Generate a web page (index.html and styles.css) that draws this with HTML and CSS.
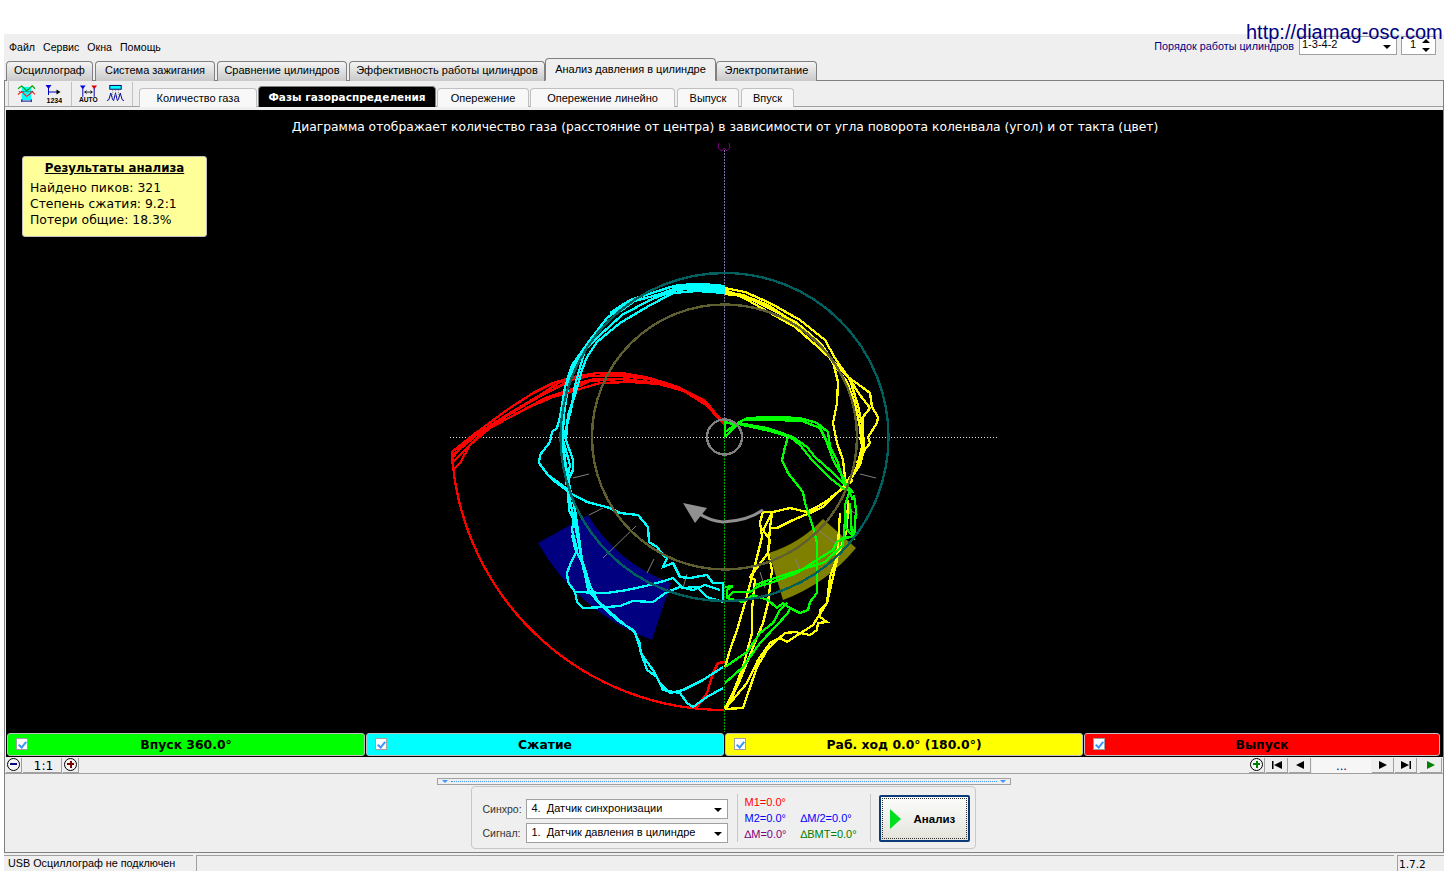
FILE: index.html
```html
<!DOCTYPE html>
<html lang="ru">

<head>
    <meta charset="UTF-8">
    <title>Анализ давления в цилиндре</title>
    <link rel="stylesheet" href="styles.css">
</head>

<body>
    <a class="site-url">http://diamag-osc.com</a>

    <div class="app">
        <div class="menubar">
            <span class="menu-item">Файл</span>
            <span class="menu-item">Сервис</span>
            <span class="menu-item">Окна</span>
            <span class="menu-item">Помощь</span>
            <div class="order">
                <span class="order-label">Порядок работы цилиндров</span>
                <div class="combo order-combo">1-3-4-2<i class="arrow-down"></i></div>
                <div class="combo order-spin">1<span class="spin-arrows"><i class="arrow-up"></i><i class="arrow-down"></i></span></div>
            </div>
        </div>

        <div class="tabs">
            <div class="tab tab-a">Осциллограф</div>
            <div class="tab tab-b">Система зажигания</div>
            <div class="tab tab-c">Сравнение цилиндров</div>
            <div class="tab tab-d">Эффективность работы цилиндров</div>
            <div class="tab tab-active">Анализ давления в цилиндре</div>
            <div class="tab tab-f">Электропитание</div>
        </div>

        <div class="panel">
            <div class="subbar">
                <div class="tools">
                    <svg class="tool tool-wide" viewBox="0 0 20 20">
                        <rect x="5" y="3" width="10" height="14" fill="#00ffff" />
                        <path d="M1 5 L5 2 L8 5 L10 7 L13 5 L16 2 L19 5" fill="none" stroke="#00a000" stroke-width="1.2" />
                        <path d="M1 11 L5 8 L8 11 L10 13 L13 11 L16 8 L19 11" fill="none" stroke="#ff2020" stroke-width="1.2" />
                        <path d="M2 8 H18" stroke="#333" stroke-dasharray="1 1" />
                        <path d="M5 18 H15 M5 16 V19 M15 16 V19" stroke="#000090" stroke-width="1" fill="none" />
                    </svg>
                    <svg class="tool tool-second" viewBox="0 0 16 19">
                        <path d="M0 1 H6 L3 5 Z" fill="#0000e0" />
                        <path d="M3 4 V11 M3 8 H13" stroke="#0000c0" fill="none" />
                        <path d="M11 5.500 L15 8 L11 10.500 Z" fill="#000" />
                        <text x="1" y="18.500" class="tool-text">1234</text>
                    </svg>
                    <span class="tool-sep"></span>
                    <svg class="tool tool-wide tool-third" viewBox="0 0 20 19">
                        <path d="M1 1 H7 L4 5 Z" fill="#0000e0" />
                        <path d="M13 1 H19 L16 5 Z" fill="#e00000" />
                        <path d="M4 4 V13 M16 4 V13" stroke="#0000c0" fill="none" />
                        <path d="M6 8 H14 M6 8 L8 6.500 M6 8 L8 9.500 M14 8 L12 6.500 M14 8 L12 9.500" stroke="#000" stroke-width=".9" fill="none" />
                        <text x="0" y="18.500" class="tool-text">AUTO</text>
                    </svg>
                    <svg class="tool tool-wide" viewBox="0 0 20 19">
                        <rect x="4" y="1" width="12" height="4" fill="#00ffff" stroke="#000060" />
                        <path d="M1 17 L3 16 L5 9 L7 16 L8 17 L10 9 L12 17 L13 16 L15 9 L17 16 L19 17" fill="none" stroke="#0000a0" stroke-width="1" />
                        <path d="M7 6 V14 M10 6 V14 M13 6 V14" stroke="#888" stroke-dasharray="1 1" />
                    </svg>
                    <span class="tool-sep tool-sep-end"></span>
                </div>
                <div class="subtabs">
                    <div class="subtab sub-a">Количество газа</div>
                    <div class="subtab subtab-active">Фазы газораспределения</div>
                    <div class="subtab sub-c">Опережение</div>
                    <div class="subtab sub-d">Опережение линейно</div>
                    <div class="subtab sub-e">Выпуск</div>
                    <div class="subtab sub-f">Впуск</div>
                </div>
            </div>

            <div class="scope">
                <div class="chart">
                    <div class="chart-title">Диаграмма отображает количество газа (расстояние от центра) в зависимости от угла поворота коленвала (угол) и от такта (цвет)</div>

                    <div class="results">
                        <div class="results-title">Результаты анализа</div>
                        <div>Найдено пиков: 321</div>
                        <div>Степень сжатия: 9.2:1</div>
                        <div>Потери общие: 18.3%</div>
                    </div>

                    <svg class="plot" viewBox="6 110 1437 622">
                        <!-- sectors -->
                        <path fill="#000080" d="M538 543 L588 515 A156 156 0 0 0 671 583 L652 640 A215 215 0 0 1 538 543 Z" />
                        <path fill="#808000" d="M769 553 L783 600 A173 173 0 0 0 856 548 L823 519 A127 127 0 0 1 769 553 Z" />

                        <!-- axes -->
                        <path class="axis-h" d="M450 437.500 H997" />
                        <path class="axis-up" d="M724.500 150 V437" />
                        <path class="axis-down" d="M724.500 437 V732" />
                        <path class="marker" d="M719 143 L718 148 L722 151 L724 148 L727 151 L730 148 L729 143" />

                        <!-- ticks -->
                        <path class="ticks" d="M573 478 L589 474 M860 474 L876 478 M589 515 L603 508 M603 558 L636 526 M647 573 L654 559 M683 588 L687 574 M795 558 L800 570 M818 530 L840 547 M760 572 L765 588 M850 510 L858 515" />

                        <!-- exhaust -->
                        <g class="line red">
                            <path d="M453 466 A273 273 0 0 0 724.500 710" />
                            <polyline points="725,425 707,403 680,388 653,380 627,375 597,373 573,377 553,383 533,393 507,410 473,435 452,452 453,470" />
                            <polyline points="725,425 707,403 687,392 660,384 630,382 600,383 573,391 553,397 527,408 490,428 470,445 460,463 453,470" />
                            <polyline points="723,422 707,404 680,389 650,382 620,379 590,381 570,390 545,398 520,412 485,430 465,442 452,458" />
                            <polyline points="452,456 480,432 510,413 540,395 560,382 590,376 620,376 650,379" />
                            <polyline points="724,424 706,405 684,391 655,383 625,379 595,379 575,384" />
                            <polyline points="722,421 705,401 678,387 650,378 622,373 600,374" />
                            <polyline points="453,462 478,437 505,417 535,399 556,388 572,380" />
                            <polyline points="690,708 697,707 707,693 713,673 718,663 725,662" />
                        </g>

                        <!-- compression -->
                        <g class="line cyan">
                            <polyline points="725,290 703,286 680,287 657,295 627,303 607,318 590,340 572,365 565,387 560,417 557,428 552,432 550,442 540,455 539,463 548,475 562,485 568,490 569,510 575,523 583,567 590,593 603,607 617,620 633,630 640,643 640,650 647,670 657,677 663,690 680,693 687,703 693,707 707,697 723,688" />
                            <polyline points="725,293 697,291 673,293 647,307 620,323 597,342 587,357 582,370 575,395 568,415 566,440 573,460 573,470 568,480 575,510 578,530 582,560 590,585 597,600 610,612 625,625 635,632 642,655 653,670 660,683 670,693 683,690 703,680 723,667" />
                            <polyline points="725,288 700,284 670,287 640,297 615,315 595,335 580,355 570,375 566,400 562,430 565,460 568,478 572,500" />
                            <polyline points="724,291 700,288 675,290 650,300 622,315 600,335 585,350 575,385 571,410 563,440 570,465 566,485" />
                            <polyline points="725,286 702,284 678,285 655,292 630,300 610,313" />
                            <polyline points="725,292 700,290 680,289 660,296" />
                            <polyline points="564,415 562,445 566,470 570,500 574,520 578,540" />
                            <polyline points="548,475 553,480 570,493 587,502 610,508 620,513 638,515 648,527 649,542 657,547 663,555 667,558 663,567 673,563 680,577 690,578 707,575 713,583 723,583 723,600" />
                            <polyline points="575,592 607,593 627,590 650,585 667,580 673,578 683,588 697,587 707,597 723,602" />
                            <polyline points="577,602 583,608 607,607 620,606 633,601 653,602 667,592 680,587 693,590 705,585 720,590" />
                            <polyline points="575,510 572,530 577,550 570,565 567,573 568,582 575,592 577,602" />
                            <polyline points="572,535 575,548 583,565 588,590 600,603" />
                        </g>

                        <!-- power -->
                        <g class="line yellow">
                            <polyline points="725,292 743,295 767,307 797,323 820,343 833,363 847,382 855,403 860,427 862,447 857,467 847,485 830,498" />
                            <polyline points="725,288 745,292 770,303 800,320 825,340 835,358 850,380 858,405 863,430 864,450 860,465 850,480" />
                            <polyline points="725,290 744,298 765,310 795,327 818,347 832,360 848,377 862,387 870,393 872,407 878,417 877,423 868,437 870,443 863,452 857,463" />
                            <polyline points="725,294 745,296 768,305 798,325 822,345 830,357" />
                            <polyline points="861,425 863,445 860,460 853,475" />
                            <polyline points="833,362 838,382 837,403 833,423 837,443 843,460 845,477 847,487" />
                            <polyline points="847,375 860,395 870,408 863,417 863,427 860,440" />
                            <polyline points="853,473 843,487 833,497 817,507 807,512 790,508 773,512 763,512 760,522 762,537 757,557 752,577 745,603 737,630 730,650 725,667" />
                            <polyline points="853,480 837,493 823,507 810,513 793,520 777,528 770,528 772,513 763,530 770,540 768,553 772,570 768,603 763,623 752,650 740,680 728,706" />
                            <polyline points="770,528 768,553 750,577 755,580 752,610 752,633 743,667 733,693 725,708" />
                            <polyline points="840,513 837,560 827,603 820,610 820,617 827,622 818,623 817,630 810,635 795,632 785,633 777,640 767,650 757,667 743,708 725,709" />
                            <polyline points="848,500 847,530 830,577 827,603 813,625 787,642 780,638 770,643 758,660 747,683 725,709" />
                        </g>

                        <!-- intake -->
                        <g class="line green">
                            <polyline points="725,437 725,422 737,425 725,437" />
                            <polyline points="725,432 738,423 747,418 773,417 800,418 817,423 828,432 830,447 837,460 843,480 853,493" />
                            <polyline points="738,423 767,428 793,437 807,447 815,457 833,473 847,487 853,500" />
                            <polyline points="745,419 775,420 802,421 820,428 826,440 834,462 845,480" />
                            <polyline points="738,424 770,431 790,437 800,445 812,460 830,478 845,490" />
                            <polyline points="745,420 770,419 800,420 815,426" />
                            <polyline points="750,426 770,430 785,434" />
                            <polyline points="788,437 785,447 782,460 788,473 803,492 805,503 813,527 817,543 817,593 810,602 808,610 800,613 790,608 783,603 777,608 768,600 753,595 743,602 727,598 727,590 733,586 725,587" />
                            <polyline points="850,503 852,537 843,538 837,542 833,550 820,558 797,573 773,582 757,587 750,592 733,592 727,598" />
                            <polyline points="854,495 856,510 854,538 846,528 845,505 850,490" />
                            <polyline points="845,520 843,545 825,562 800,570 775,578 755,585" />
                            <polyline points="725,667 747,652 760,633 773,623 780,610 787,603" />
                            <polyline points="725,683 743,667 760,643 777,625 788,613 790,608" />
                        </g>

                        <!-- reference circles -->
                        <circle class="ring ring-teal" cx="724.500" cy="437" r="164" />
                        <circle class="ring ring-olive" cx="724.500" cy="437" r="132.500" />
                        <circle class="ring ring-grey" cx="724.500" cy="437" r="17.500" />

                        <!-- rotation arrow -->
                        <path class="turn" d="M763 510 Q747 521 723 522 Q710 521 698 513" />
                        <path class="turn-head" d="M683 503 L707 508 L695 523 Z" />
                    </svg>
                </div>

                <div class="legend">
                    <div class="stroke stroke-green"><span class="check"></span>Впуск 360.0°</div>
                    <div class="stroke stroke-cyan"><span class="check"></span>Сжатие</div>
                    <div class="stroke stroke-yellow"><span class="check"></span>Раб. ход 0.0° (180.0°)</div>
                    <div class="stroke stroke-red"><span class="check"></span>Выпуск</div>
                </div>
            </div>

            <div class="scalebar">
                <span class="round-btn"><i class="sign sign-minus"></i></span>
                <span class="scale-value">1:1</span>
                <span class="round-btn"><i class="sign sign-plus"></i></span>
                <div class="nav">
                    <span class="round-btn"><i class="sign sign-plus-green"></i></span>
                    <span class="nav-btn"><svg viewBox="0 0 12 10"><path d="M1 1 H2.500 V9 H1 Z M11 1 V9 L3 5 Z" /></svg></span>
                    <span class="nav-btn"><svg viewBox="0 0 12 10"><path d="M10 1 V9 L2 5 Z" /></svg></span>
                    <span class="nav-value">...</span>
                    <span class="nav-btn"><svg viewBox="0 0 12 10"><path d="M2 1 V9 L10 5 Z" /></svg></span>
                    <span class="nav-btn"><svg viewBox="0 0 12 10"><path d="M1 1 V9 L9 5 Z M9.500 1 H11 V9 H9.500 Z" /></svg></span>
                    <span class="nav-btn nav-play"><svg viewBox="0 0 12 10"><path d="M2 1 V9 L10 5 Z" /></svg></span>
                </div>
            </div>

            <div class="controls">
                <div class="splitter"><i class="split-mark"></i><span class="split-dots"></span><i class="split-mark"></i></div>
                <div class="group">
                    <div class="signals">
                        <div class="signal-row">
                            <span class="signal-label">Синхро:</span>
                            <div class="combo signal-combo">4.&nbsp; Датчик синхронизации<i class="arrow-down"></i></div>
                        </div>
                        <div class="signal-row">
                            <span class="signal-label">Сигнал:</span>
                            <div class="combo signal-combo">1.&nbsp; Датчик давления в цилиндре<i class="arrow-down"></i></div>
                        </div>
                    </div>
                    <div class="readings">
                        <span class="m-red">M1=0.0°</span>
                        <span></span>
                        <span class="m-blue">M2=0.0°</span>
                        <span class="m-blue"><b class="delta">∆</b>M/2=0.0°</span>
                        <span class="m-purple"><b class="delta">∆</b>M=0.0°</span>
                        <span class="m-green"><b class="delta">∆</b>BMT=0.0°</span>
                    </div>
                    <button class="run-btn"><i class="run-icon"></i><span>Анализ</span></button>
                </div>
            </div>
        </div>

        <div class="status">
            <div class="status-cell status-msg">USB Осциллограф не подключен</div>
            <div class="status-cell status-fill"></div>
            <div class="status-cell status-ver">1.7.2</div>
        </div>
    </div>
</body>

</html>
```

FILE: styles.css
```css
html,
body {
    margin: 0;
    height: 876px;
    overflow: hidden;
    background: white;
}

body {
    font-family: "Liberation Sans", Arial, sans-serif;
    font-size: 10.600px;
    color: black;
}

.site-url {
    position: absolute;
    top: 20px;
    left: 1246px;
    font-size: 20px;
    line-height: 24px;
    color: #000080;
    z-index: 2;
}

.app {
    margin: 34px 0 0 4px;
    width: 1440px;
    height: 837px;
    background: #efefef;
}

/* Menu */
.menubar {
    display: flex;
    align-items: center;
    height: 24px;
    padding-left: 5px;
    gap: 8px;
    box-sizing: border-box;
}

.menu-item {
    position: relative;
    top: 1px;
}

.order {
    margin-left: auto;
    display: flex;
    align-items: center;
    gap: 5px;
    margin-right: 8px;
    position: relative;
    top: -1px;
}

.order-label {
    color: #000080;
    font-size: 10.800px;
    position: relative;
    top: 1px;
}

.combo {
    position: relative;
    background: white;
    border: 1px solid #a0a0a0;
    box-sizing: border-box;
}

.order-combo {
    width: 98px;
    height: 19px;
    padding-left: 2px;
    line-height: 14px;
    font-size: 11px;
}

.order-spin {
    width: 35px;
    height: 19px;
    padding-left: 8px;
    line-height: 14px;
    font-size: 11px;
    margin-left: -1px;
}

.arrow-down,
.arrow-up {
    display: block;
    width: 0;
    height: 0;
    border-left: 4px solid transparent;
    border-right: 4px solid transparent;
}

.arrow-down {
    border-top: 4px solid black;
}

.arrow-up {
    border-bottom: 4px solid black;
}

.combo > .arrow-down {
    position: absolute;
    right: 5px;
    top: 8px;
}

.spin-arrows {
    position: absolute;
    right: 5px;
    top: 2px;
    display: flex;
    flex-direction: column;
    gap: 5px;
}

/* Top tabs */
.tabs {
    display: flex;
    align-items: flex-end;
    gap: 2px;
    height: 23px;
    padding-left: 2px;
    box-sizing: border-box;
    position: relative;
    z-index: 1;
    margin-bottom: -1px;
}

.tab {
    height: 20px;
    box-sizing: border-box;
    border: 1px solid #808080;
    border-bottom: none;
    border-radius: 4px 4px 0 0;
    background: linear-gradient(#f4f4f4, #c9c9c9);
    text-align: center;
    line-height: 16px;
    font-size: 11px;
}

.tab-a { width: 87px; }
.tab-b { width: 120px; }
.tab-c { width: 130px; }
.tab-d { width: 196px; }
.tab-f { width: 101px; margin-left: -2px; }

.tab-active {
    width: 171px;
    height: 23px;
    margin-left: -2px;
    background: #efefef;
    line-height: 21px;
    border-bottom: 1px solid #efefef;
}

.panel {
    width: 1440px;
    height: 773px;
    box-sizing: border-box;
    border: 1px solid #808080;
    display: flex;
    flex-direction: column;
}

/* Tool strip */
.subbar {
    display: flex;
    align-items: flex-end;
    height: 26px;
    box-sizing: border-box;
    border-bottom: 1px solid #a0a0a0;
    padding-left: 3px;
}

.tools {
    display: flex;
    align-items: center;
    height: 25px;
    border-left: 1px solid #c0c0c0;
    padding-left: 8px;
}

.tool {
    display: block;
    height: 19px;
    margin-right: 9px;
}

.tool-wide {
    width: 19px;
}

.tool-second {
    width: 17px;
}

.tool-third {
    margin-right: 8px;
}

.tool-text {
    font-family: "Liberation Sans", Arial, sans-serif;
    font-size: 7px;
    font-weight: bold;
}

.tool-sep {
    width: 1px;
    height: 24px;
    background: #c0c0c0;
    margin: 0 7px 0 0;
}

.tool-sep-end {
    margin-left: -2px;
}

.subtabs {
    display: flex;
    align-items: flex-end;
    gap: 1px;
    margin-left: -1px;
    margin-bottom: -1px;
}

.subtab {
    height: 19px;
    box-sizing: border-box;
    border: 1px solid #c0c0c0;
    border-bottom: none;
    border-radius: 4px 4px 0 0;
    background: #f8f8f8;
    text-align: center;
    line-height: 19px;
    font-size: 11px;
}

.sub-a { width: 118px; }
.sub-c { width: 92px; }
.sub-d { width: 145px; }
.sub-e { width: 62px; margin-left: 1px; }
.sub-f { width: 53px; margin-left: 1px; }

.subtab-active {
    width: 178px;
    height: 21px;
    background: black;
    color: white;
    font-family: "DejaVu Sans", sans-serif;
    font-weight: bold;
    font-size: 10.500px;
    line-height: 21px;
    border-color: #808080;
}

/* Scope */
.scope {
    margin: 3px 0 0 1px;
    width: 1437px;
    background: black;
}

.chart {
    position: relative;
    height: 622px;
    font-family: "DejaVu Sans", sans-serif;
}

.chart-title {
    position: relative;
    z-index: 1;
    padding-top: 9px;
    text-align: center;
    color: white;
    font-size: 12.300px;
    line-height: 16px;
    margin-left: 1px;
}

.results {
    position: absolute;
    left: 16px;
    top: 46px;
    width: 185px;
    height: 81px;
    box-sizing: border-box;
    z-index: 1;
    padding: 3px 7px;
    background: #ffff99;
    border: 1px solid #c0c0c0;
    border-radius: 3px;
    font-size: 12.400px;
    line-height: 16px;
}

.results-title {
    text-align: center;
    font-weight: bold;
    font-size: 11.800px;
    text-decoration: underline;
    margin-bottom: 4px;
}

.plot {
    position: absolute;
    left: 0;
    top: 0;
    width: 1437px;
    height: 622px;
}

.line {
    fill: none;
    stroke-width: 2.300;
    shape-rendering: crispEdges;
}

.red { stroke: #ff0000; }
.cyan { stroke: #00ffff; }
.yellow { stroke: #ffff00; }
.green { stroke: #00ff00; }

.axis-h {
    stroke: #e0e0e0;
    stroke-dasharray: 1 2;
}

.axis-up {
    stroke: #7777aa;
    stroke-dasharray: 2 1;
}

.axis-down {
    stroke: #00aa00;
    stroke-dasharray: 2 1;
}

.marker {
    fill: none;
    stroke: #800080;
}

.ticks {
    stroke: #808080;
}

.ring {
    fill: none;
    stroke-width: 2.400;
    shape-rendering: crispEdges;
}

.ring-teal { stroke: #005f5f; }
.ring-olive { stroke: #5f5f30; }
.ring-grey { stroke: #808080; }

.turn {
    fill: none;
    stroke: #909090;
    stroke-width: 3;
}

.turn-head {
    fill: #909090;
}

/* Strokes legend */
.legend {
    display: flex;
    gap: 1px;
    height: 25px;
    padding: 1px 3px 1px 1px;
    box-sizing: border-box;
}

.stroke {
    flex: none;
    width: 358px;
    position: relative;
    height: 23px;
    box-sizing: border-box;
    border: 1px solid #c0c0c0;
    border-radius: 3px;
    text-align: center;
    font-family: "DejaVu Sans", sans-serif;
    font-weight: bold;
    font-size: 12.400px;
    line-height: 21px;
}

.stroke-green { background: #00ff00; }
.stroke-cyan { background: #00ffff; }
.stroke-yellow { background: #ffff00; }
.stroke-red { background: #ff0000; flex: 1; }

.check {
    position: absolute;
    left: 8px;
    top: 4px;
    width: 12px;
    height: 12px;
    box-sizing: border-box;
    background: white;
    border: 1px solid #a0a0a0;
}

.check::after {
    content: "";
    position: absolute;
    left: 3px;
    top: 1px;
    width: 3px;
    height: 6px;
    border-right: 2px solid #3c96ff;
    border-bottom: 2px solid #3c96ff;
    transform: rotate(40deg);
}

/* Scale row */
.scalebar {
    display: flex;
    align-items: center;
    height: 17px;
    padding-left: 1px;
    box-sizing: border-box;
    border-bottom: 1px solid #a0a0a0;
}

.round-btn {
    display: flex;
    align-items: center;
    justify-content: center;
    width: 16px;
    height: 15px;
    box-sizing: border-box;
    border-right: 1px solid #a0a0a0;
    border-bottom: 1px solid #a0a0a0;
}

.sign {
    position: relative;
    display: block;
    width: 11px;
    height: 11px;
    border: 1px solid black;
    border-radius: 50%;
    background: #f4f4f4;
}

.sign::before {
    content: "";
    position: absolute;
    left: 2px;
    top: 4px;
    width: 7px;
    height: 2px;
    background: #000080;
}

.sign-plus::before,
.sign-plus::after {
    background: #800000;
}

.sign-plus-green::before,
.sign-plus-green::after {
    background: #008000;
}

.sign-plus::after,
.sign-plus-green::after {
    content: "";
    position: absolute;
    left: 4.500px;
    top: 2px;
    width: 2px;
    height: 7px;
}

.scale-value {
    width: 39px;
    height: 15px;
    box-sizing: border-box;
    padding-left: 3px;
    text-align: center;
    font-family: "DejaVu Sans", sans-serif;
    font-size: 12.400px;
    line-height: 16px;
    border-right: 1px solid #a0a0a0;
    border-bottom: 1px solid #a0a0a0;
    margin: 0 1px;
}

.nav {
    margin-left: auto;
    display: flex;
    align-items: center;
    gap: 1px;
    margin-right: 1px;
}

.nav-btn {
    display: flex;
    align-items: center;
    justify-content: center;
    width: 22px;
    height: 15px;
    box-sizing: border-box;
    border-right: 1px solid #a0a0a0;
    border-bottom: 1px solid #a0a0a0;
}

.nav-btn svg {
    width: 12px;
    height: 10px;
    fill: black;
}

.nav-play {
    margin-left: 2px;
}

.nav-play svg {
    fill: #008000;
}

.nav-value {
    width: 59px;
    text-align: center;
    color: #000080;
    font-size: 13px;
    line-height: 15px;
    background: #f6f6f6;
}

/* Analysis controls */
.controls {
    flex: 1;
    display: flex;
    flex-direction: column;
    align-items: center;
    padding-top: 4px;
    box-sizing: border-box;
}

.splitter {
    display: flex;
    align-items: center;
    width: 574px;
    height: 7px;
    box-sizing: border-box;
    border: 1px solid #a0a0a0;
    padding: 0 4px;
    gap: 3px;
}

.split-mark {
    width: 0;
    height: 0;
    border-left: 3px solid transparent;
    border-right: 3px solid transparent;
    border-top: 3px solid #3c96ff;
}

.split-dots {
    flex: 1;
    border-top: 1px dotted #3c96ff;
}

.group {
    display: flex;
    align-items: center;
    width: 505px;
    height: 63px;
    margin: 1px 0 0 -2px;
    box-sizing: border-box;
    border: 1px solid #c8c8c8;
    border-radius: 4px;
    padding-left: 11px;
}

.signals {
    display: flex;
    flex-direction: column;
    gap: 4px;
    width: 254px;
    padding-right: 8px;
    box-sizing: border-box;
    margin-top: 6px;
}

.signal-row {
    display: flex;
    align-items: center;
}

.signal-label {
    width: 43px;
    color: #333;
    font-size: 10.500px;
}

.signal-combo {
    width: 202px;
    height: 20px;
    padding-left: 5px;
    font-size: 11px;
    line-height: 17px;
}

.readings {
    display: grid;
    grid-template-columns: 56px 74px;
    grid-auto-rows: 16px;
    align-items: center;
    height: 48px;
    width: 134px;
    padding-left: 7px;
    box-sizing: border-box;
    border-left: 1px solid #c8c8c8;
    border-right: 1px solid #c8c8c8;
    font-size: 11px;
    margin-right: 8px;
}

.delta {
    font-weight: normal;
}

.m-red { color: #ff0000; }
.m-blue { color: #0000ff; }
.m-purple { color: #800080; }
.m-green { color: #008000; }

.run-btn {
    display: flex;
    align-items: center;
    width: 91px;
    height: 47px;
    margin-top: 2px;
    padding: 0 0 0 9px;
    box-sizing: border-box;
    border: 2px solid #0a3a78;
    border-radius: 2px;
    background: linear-gradient(#fcfcfc, #e4e4dc);
    outline: 1px dotted #333;
    outline-offset: -4px;
    font-family: "Liberation Sans", Arial, sans-serif;
    font-size: 11.500px;
    font-weight: bold;
}

.run-icon {
    width: 0;
    height: 0;
    border-top: 10px solid transparent;
    border-bottom: 10px solid transparent;
    border-left: 11px solid #00e020;
    margin-right: 13px;
}

/* Status bar */
.status {
    display: flex;
    height: 16px;
    margin-top: 2px;
    gap: 3px;
}

.status-cell {
    box-sizing: border-box;
    border-top: 1px solid #a0a0a0;
    border-left: 1px solid #a0a0a0;
    line-height: 14px;
    font-size: 10.800px;
}

.status-msg {
    width: 189px;
    padding-left: 4px;
    border-left: none;
}

.status-fill {
    width: 1198px;
}

.status-ver {
    width: 47px;
    padding-left: 1px;
    font-family: "DejaVu Sans", sans-serif;
    font-size: 10.500px;
    line-height: 16px;
}
```
